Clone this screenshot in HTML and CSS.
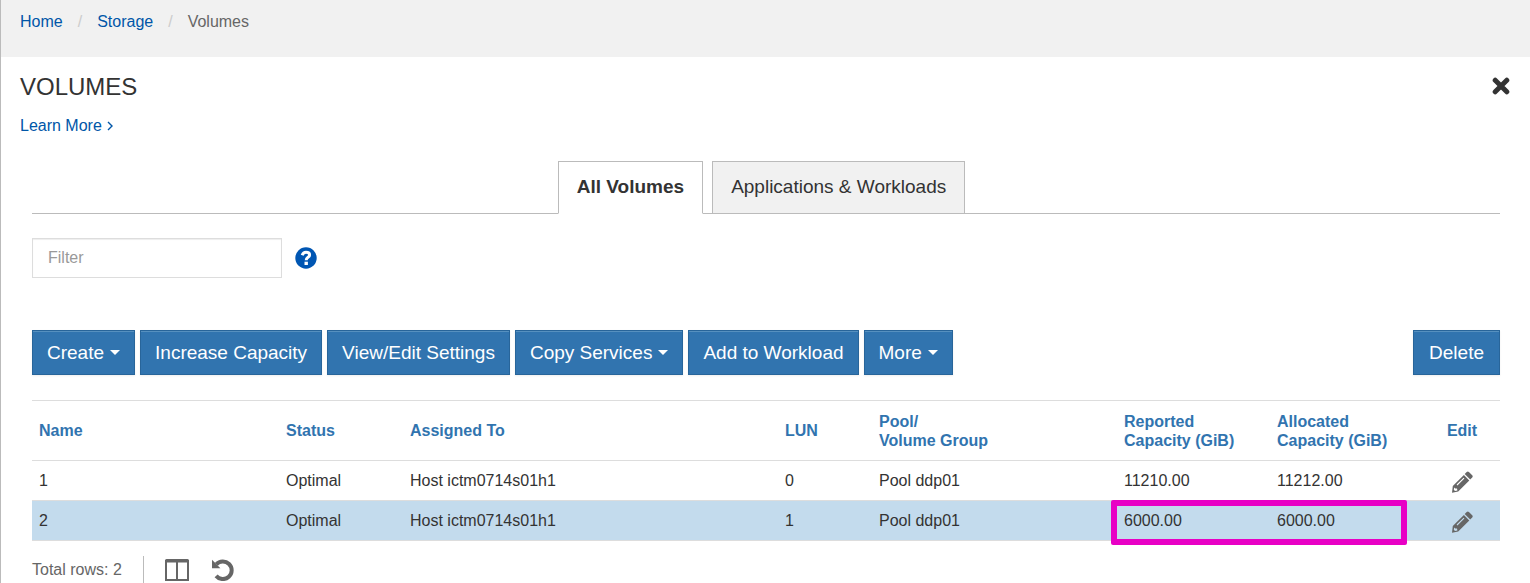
FILE: index.html
```
<!DOCTYPE html>
<html lang="en">
<head>
<meta charset="utf-8">
<title>Volumes</title>
<link rel="stylesheet" href="styles.css">
</head>
<body>
<svg class="defs" aria-hidden="true">
  <symbol id="pencil" viewBox="0 0 22 22">
    <path d="M15.700 1.100q1.100-1 2.200 0l3.300 3.200q1 1.100 0 2.200l-2 2-5.500-5.400z"/>
    <path fill-rule="evenodd" d="M12.900 4.100l5.400 5.400L7.200 20.500 1 21.800l.8-6.700zM5.600 13.600l.8.800 7-6.900-.8-.8zM3.200 16.500l-.4 2.300 1.200 1.100 2.400-.5-.4-1.800-1.700-.2z"/>
  </symbol>
</svg>
<div class="page">
  <nav class="crumb-bar" aria-label="Breadcrumb">
    <ol class="crumbs">
      <li><a href="#">Home</a></li>
      <li><a href="#">Storage</a></li>
      <li aria-current="page">Volumes</li>
    </ol>
  </nav>
  <header class="page-head">
    <div>
      <h1 class="title">VOLUMES</h1>
      <a class="learn" href="#">Learn More
        <svg class="chevron" width="7" height="10" viewBox="0 0 7 10" aria-hidden="true"><path d="M1 1l4 4-4 4"/></svg>
      </a>
    </div>
    <button class="icon-button" type="button" aria-label="Close">
      <svg width="18" height="18" viewBox="0 0 18 18" aria-hidden="true"><path class="close-mark" d="M3.200 3.200l11.600 11.600M14.800 3.200L3.200 14.800"/></svg>
    </button>
  </header>
  <main class="content">
    <div class="tabs" role="tablist">
      <button class="tab tab-active" type="button" role="tab" aria-selected="true">All Volumes</button>
      <button class="tab" type="button" role="tab" aria-selected="false">Applications &amp; Workloads</button>
    </div>
    <div class="filter-row">
      <input class="filter" type="text" placeholder="Filter" aria-label="Filter">
      <button class="icon-button" type="button" aria-label="Help">
        <svg width="22" height="22" viewBox="0 0 22 22" aria-hidden="true">
          <circle class="help-disc" cx="11" cy="11" r="10.700"/>
          <path class="help-hook" d="M7.200 8.300C7.900 6.200 9.200 5.200 11 5.200c2.100 0 3.600 1.100 3.600 2.700 0 2.600-3.400 2.300-3.400 5.300"/>
          <path class="help-dot" d="M9.500 14.700h3.400v3.300H9.500z"/>
        </svg>
      </button>
    </div>
    <div class="toolbar">
      <button class="btn" type="button">Create <span class="caret"></span></button>
      <button class="btn" type="button">Increase Capacity</button>
      <button class="btn" type="button">View/Edit Settings</button>
      <button class="btn" type="button">Copy Services <span class="caret"></span></button>
      <button class="btn" type="button">Add to Workload</button>
      <button class="btn" type="button">More <span class="caret"></span></button>
      <button class="btn btn-end" type="button">Delete</button>
    </div>
    <table class="grid">
      <colgroup>
        <col class="col-name"><col class="col-status"><col class="col-host"><col class="col-lun">
        <col class="col-pool"><col class="col-reported"><col class="col-allocated"><col class="col-edit">
      </colgroup>
      <thead>
        <tr>
          <th scope="col">Name</th>
          <th scope="col">Status</th>
          <th scope="col">Assigned To</th>
          <th scope="col">LUN</th>
          <th scope="col">Pool/<br>Volume Group</th>
          <th scope="col">Reported<br>Capacity (GiB)</th>
          <th scope="col">Allocated<br>Capacity (GiB)</th>
          <th scope="col" class="edit">Edit</th>
        </tr>
      </thead>
      <tbody>
        <tr>
          <td>1</td><td>Optimal</td><td>Host ictm0714s01h1</td><td>0</td><td>Pool ddp01</td><td>11210.00</td><td>11212.00</td>
          <td class="edit"><button class="icon-button" type="button" aria-label="Edit volume 1"><svg class="pencil" width="22" height="22"><use href="#pencil"/></svg></button></td>
        </tr>
        <tr class="selected">
          <td>2</td><td>Optimal</td><td>Host ictm0714s01h1</td><td>1</td><td>Pool ddp01</td><td class="marked">6000.00</td><td>6000.00</td>
          <td class="edit"><button class="icon-button" type="button" aria-label="Edit volume 2"><svg class="pencil" width="22" height="22"><use href="#pencil"/></svg></button></td>
        </tr>
      </tbody>
    </table>
    <footer class="grid-foot">
      <span class="total">Total rows: 2</span>
      <button class="icon-button" type="button" aria-label="Columns">
        <svg width="24" height="22" viewBox="0 0 24 22" aria-hidden="true"><path class="frame" d="M1 2h22v19H1zM12 2v19"/><path class="frame-bar" d="M0 1.500Q0 0 1.500 0h21Q24 0 24 1.500V3.500H0z"/></svg>
      </button>
      <button class="icon-button" type="button" aria-label="Refresh">
        <svg width="22" height="22" viewBox="0 0 22 22" aria-hidden="true"><path class="arc" d="M4.300 5.400A8.800 8.800 0 1 1 4.100 16.900"/><path class="arc-head" d="M0 .8v8.400h8.400z"/></svg>
      </button>
    </footer>
  </main>
</div>
</body>
</html>
```
FILE: styles.css
```
*, *::before, *::after { box-sizing: border-box; }
body {
  margin: 0;
  font: 16px/20px "Liberation Sans", Arial, sans-serif;
  color: #333;
  background: #fff;
  height: 100vh;
  overflow: hidden;
}
a { color: #0056a8; text-decoration: none; }
button, input { font: inherit; color: inherit; }
.defs { position: absolute; width: 0; height: 0; }
.page { min-height: 100vh; border-left: 1px solid #bbb; }

.crumb-bar { background: #f1f1f1; padding: 12px 19px 25px; }
.crumbs { display: flex; margin: 0; padding: 0; list-style: none; color: #666; }
.crumbs li + li::before { content: "/"; color: #ccc; padding: 0 15px; }

.page-head { display: flex; justify-content: space-between; align-items: flex-start; padding: 15px 20px 0 19px; }
.title { margin: 0 0 14px; font-size: 24px; line-height: 30px; font-weight: 400; }
.learn { display: flex; align-items: center; gap: 5px; }
.chevron { fill: none; stroke: #0056a8; stroke-width: 1.400; }
.page-head .icon-button { margin-top: 5px; }
.icon-button { display: inline-flex; padding: 0; border: 0; background: none; }
.close-mark { stroke: #333; stroke-width: 5; stroke-linecap: round; }

.content { padding: 25px 30px 0 31px; }
.tabs { display: flex; justify-content: center; border-bottom: 1px solid #bbb; }
.tab {
  height: 53px;
  margin: 0 9px -1px 0;
  padding: 0 18px 1px;
  border: 1px solid #bbb;
  background: #f1f1f1;
  font-size: 19px;
}
.tab-active { background: #fff; border-bottom-color: #fff; font-weight: 700; }

.filter-row { display: flex; align-items: center; gap: 13px; margin-top: 24px; }
.filter {
  width: 250px;
  height: 40px;
  padding: 0 15px;
  border: 1px solid #ddd;
  box-shadow: inset 0 1px 1px #eee;
  background: #fff;
}
.filter::placeholder { color: #999; }
.help-disc { fill: #0056b3; }
.help-hook { fill: none; stroke: #fff; stroke-width: 3; }
.help-dot { fill: #fff; }

.toolbar { display: flex; gap: 5px; margin: 52px 0 25px; }
.btn {
  display: flex;
  align-items: center;
  gap: 6px;
  height: 45px;
  padding: 0 14px;
  border: 1px solid #28659a;
  background: #3174af;
  box-shadow: inset 0 1px 0 #5690bf, 0 1px 2px #eee;
  color: #fff;
  font-size: 19px;
  white-space: nowrap;
}
.btn-end { margin-left: auto; padding: 0 15px; }
.caret { border: 5px solid transparent; border-top-color: #fff; border-bottom: 0; }

.grid { width: 100%; table-layout: fixed; border-collapse: collapse; border-top: 1px solid #ddd; }
.col-name { width: 247px; }
.col-status { width: 124px; }
.col-host { width: 375px; }
.col-lun { width: 94px; }
.col-pool { width: 245px; }
.col-reported { width: 153px; }
.col-allocated { width: 154px; }
.col-edit { width: 76px; }
.grid th, .grid td { padding: 0 0 0 7px; border-bottom: 1px solid #ddd; text-align: left; vertical-align: middle; }
.grid th { height: 60px; color: #3174af; line-height: 19px; }
.grid td { height: 40px; }
.grid .edit { padding: 0; text-align: center; }
.grid td.edit { padding-top: 2px; }
.grid .edit .icon-button { vertical-align: middle; }
.pencil { fill: #666; }
.selected { background: #c3dbed; }
.marked { position: relative; }
.marked::after {
  content: "";
  position: absolute;
  top: -1px;
  left: -6px;
  width: calc(200% - 10px);
  height: 45px;
  border: 6px solid #e800c5;
  border-radius: 2px;
}

.grid-foot { display: flex; align-items: flex-start; padding-top: 15px; color: #666; }
.total { height: 40px; padding: 4px 21px 0 0; margin-right: 21px; border-right: 1px solid #bbb; }
.grid-foot .icon-button { margin: 3px 23px 0 0; }
.frame { fill: none; stroke: #666; stroke-width: 2; }
.frame-bar { fill: #666; }
.arc { fill: none; stroke: #666; stroke-width: 4; }
.arc-head { fill: #666; }
```
